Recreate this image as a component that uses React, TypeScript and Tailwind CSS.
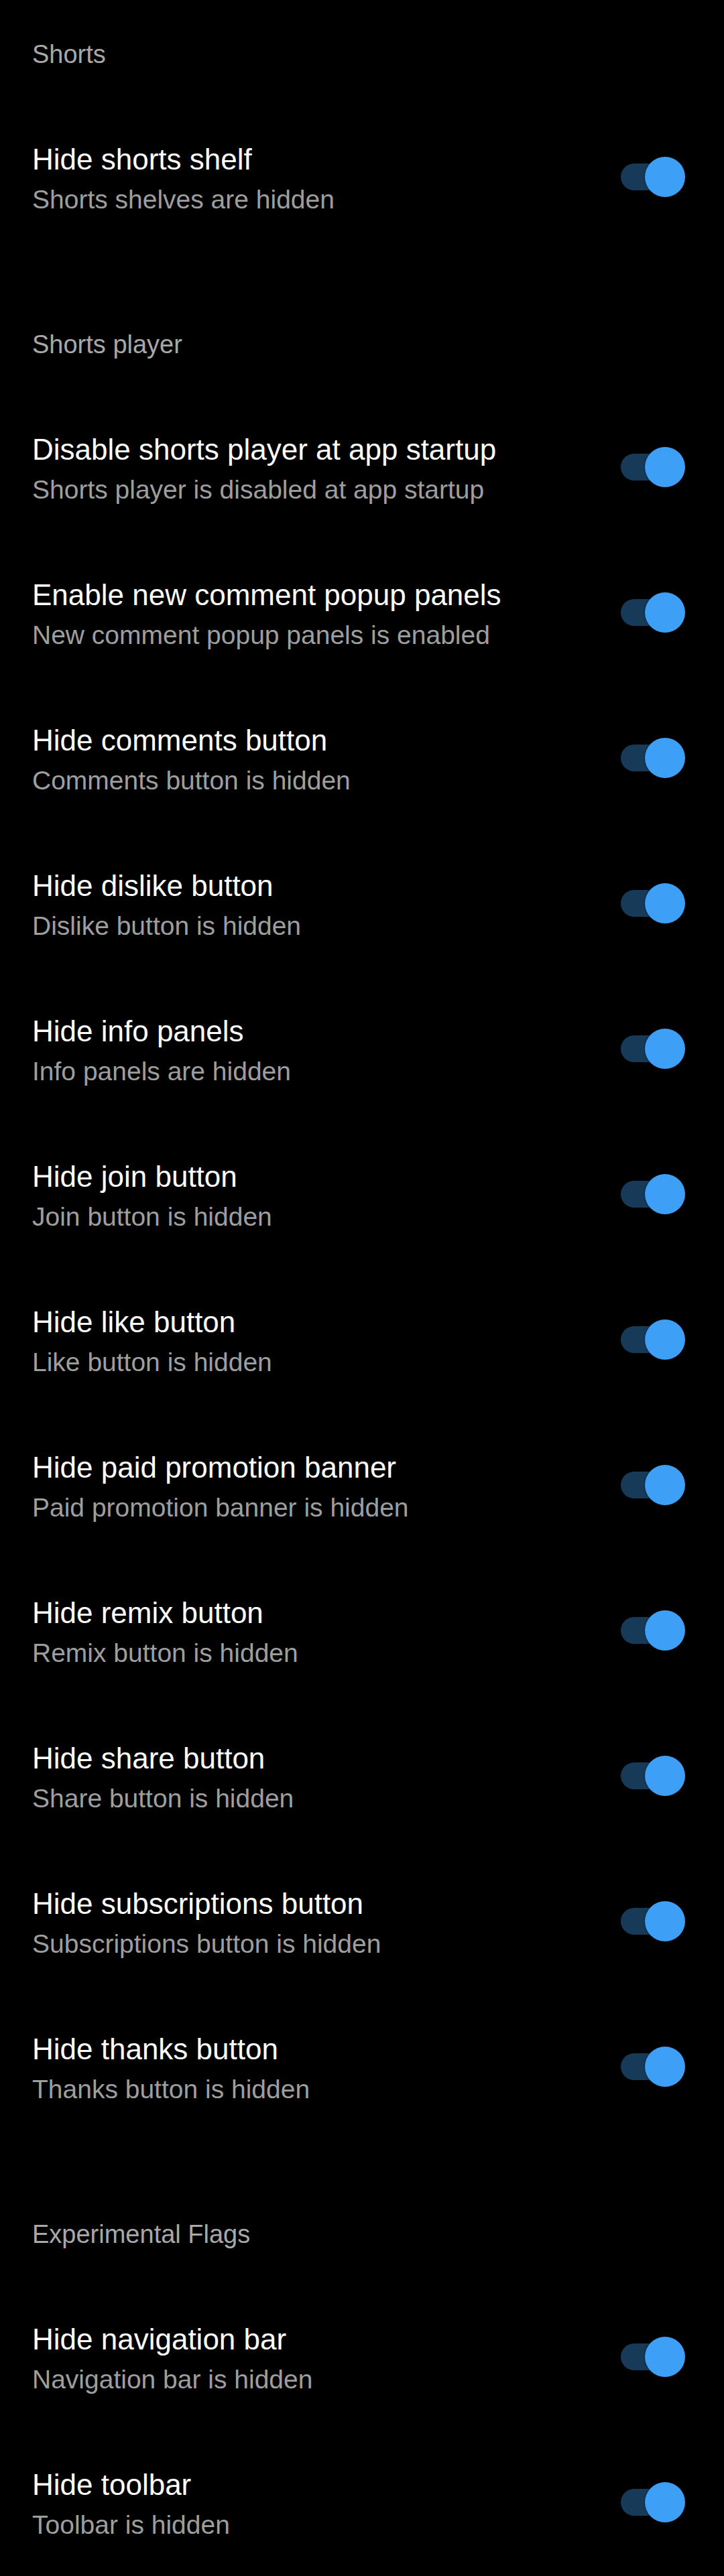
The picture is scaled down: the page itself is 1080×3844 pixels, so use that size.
const sections = [
    {
        title: "Shorts",
        items: [{ label: "Hide shorts shelf", summary: "Shorts shelves are hidden" }],
    },
    {
        title: "Shorts player",
        items: [
            { label: "Disable shorts player at app startup", summary: "Shorts player is disabled at app startup" },
            { label: "Enable new comment popup panels", summary: "New comment popup panels is enabled" },
            { label: "Hide comments button", summary: "Comments button is hidden" },
            { label: "Hide dislike button", summary: "Dislike button is hidden" },
            { label: "Hide info panels", summary: "Info panels are hidden" },
            { label: "Hide join button", summary: "Join button is hidden" },
            { label: "Hide like button", summary: "Like button is hidden" },
            { label: "Hide paid promotion banner", summary: "Paid promotion banner is hidden" },
            { label: "Hide remix button", summary: "Remix button is hidden" },
            { label: "Hide share button", summary: "Share button is hidden" },
            { label: "Hide subscriptions button", summary: "Subscriptions button is hidden" },
            { label: "Hide thanks button", summary: "Thanks button is hidden" },
        ],
    },
    {
        title: "Experimental Flags",
        items: [
            { label: "Hide navigation bar", summary: "Navigation bar is hidden" },
            { label: "Hide toolbar", summary: "Toolbar is hidden" },
        ],
    },
];

function Switch() {
    return (
        <div className="relative w-[96px] h-[60px] shrink-0 mb-[6px]">
            <div className="absolute left-0 top-[10px] w-[86px] h-[40px] rounded-full bg-[#173a59]" />
            <div className="absolute right-0 top-0 w-[60px] h-[60px] rounded-full bg-[#3d9ff5] shadow-[0_0_3px_rgba(0,0,0,0.6)]" />
        </div>
    );
}

function SwitchRow({ label, summary }: { label: string; summary: string }) {
    return (
        <div className="h-[217px] flex items-center justify-between pl-[48px] pr-[58px]">
            <div className="flex flex-col">
                <div className="text-[44px] leading-[50px] text-white">{label}</div>
                <div className="mt-[13px] text-[39px] leading-[44px] text-[#9e9e9e]">{summary}</div>
            </div>
            <Switch />
        </div>
    );
}

export default function App() {
    return (
        <div className="min-h-[3844px] bg-black font-['Liberation_Sans',Arial,sans-serif]">
            {sections.map((section, i) => (
                <div key={section.title} className={i < sections.length - 1 ? "pb-[58px]" : ""}>
                    {/* Category header */}
                    <div className="pt-[59px] pb-[55px] pl-[48px] text-[38px] leading-[44px] text-[#a8a8a8]">
                        {section.title}
                    </div>
                    {section.items.map((item) => (
                        <SwitchRow key={item.label} label={item.label} summary={item.summary} />
                    ))}
                </div>
            ))}
        </div>
    );
}
